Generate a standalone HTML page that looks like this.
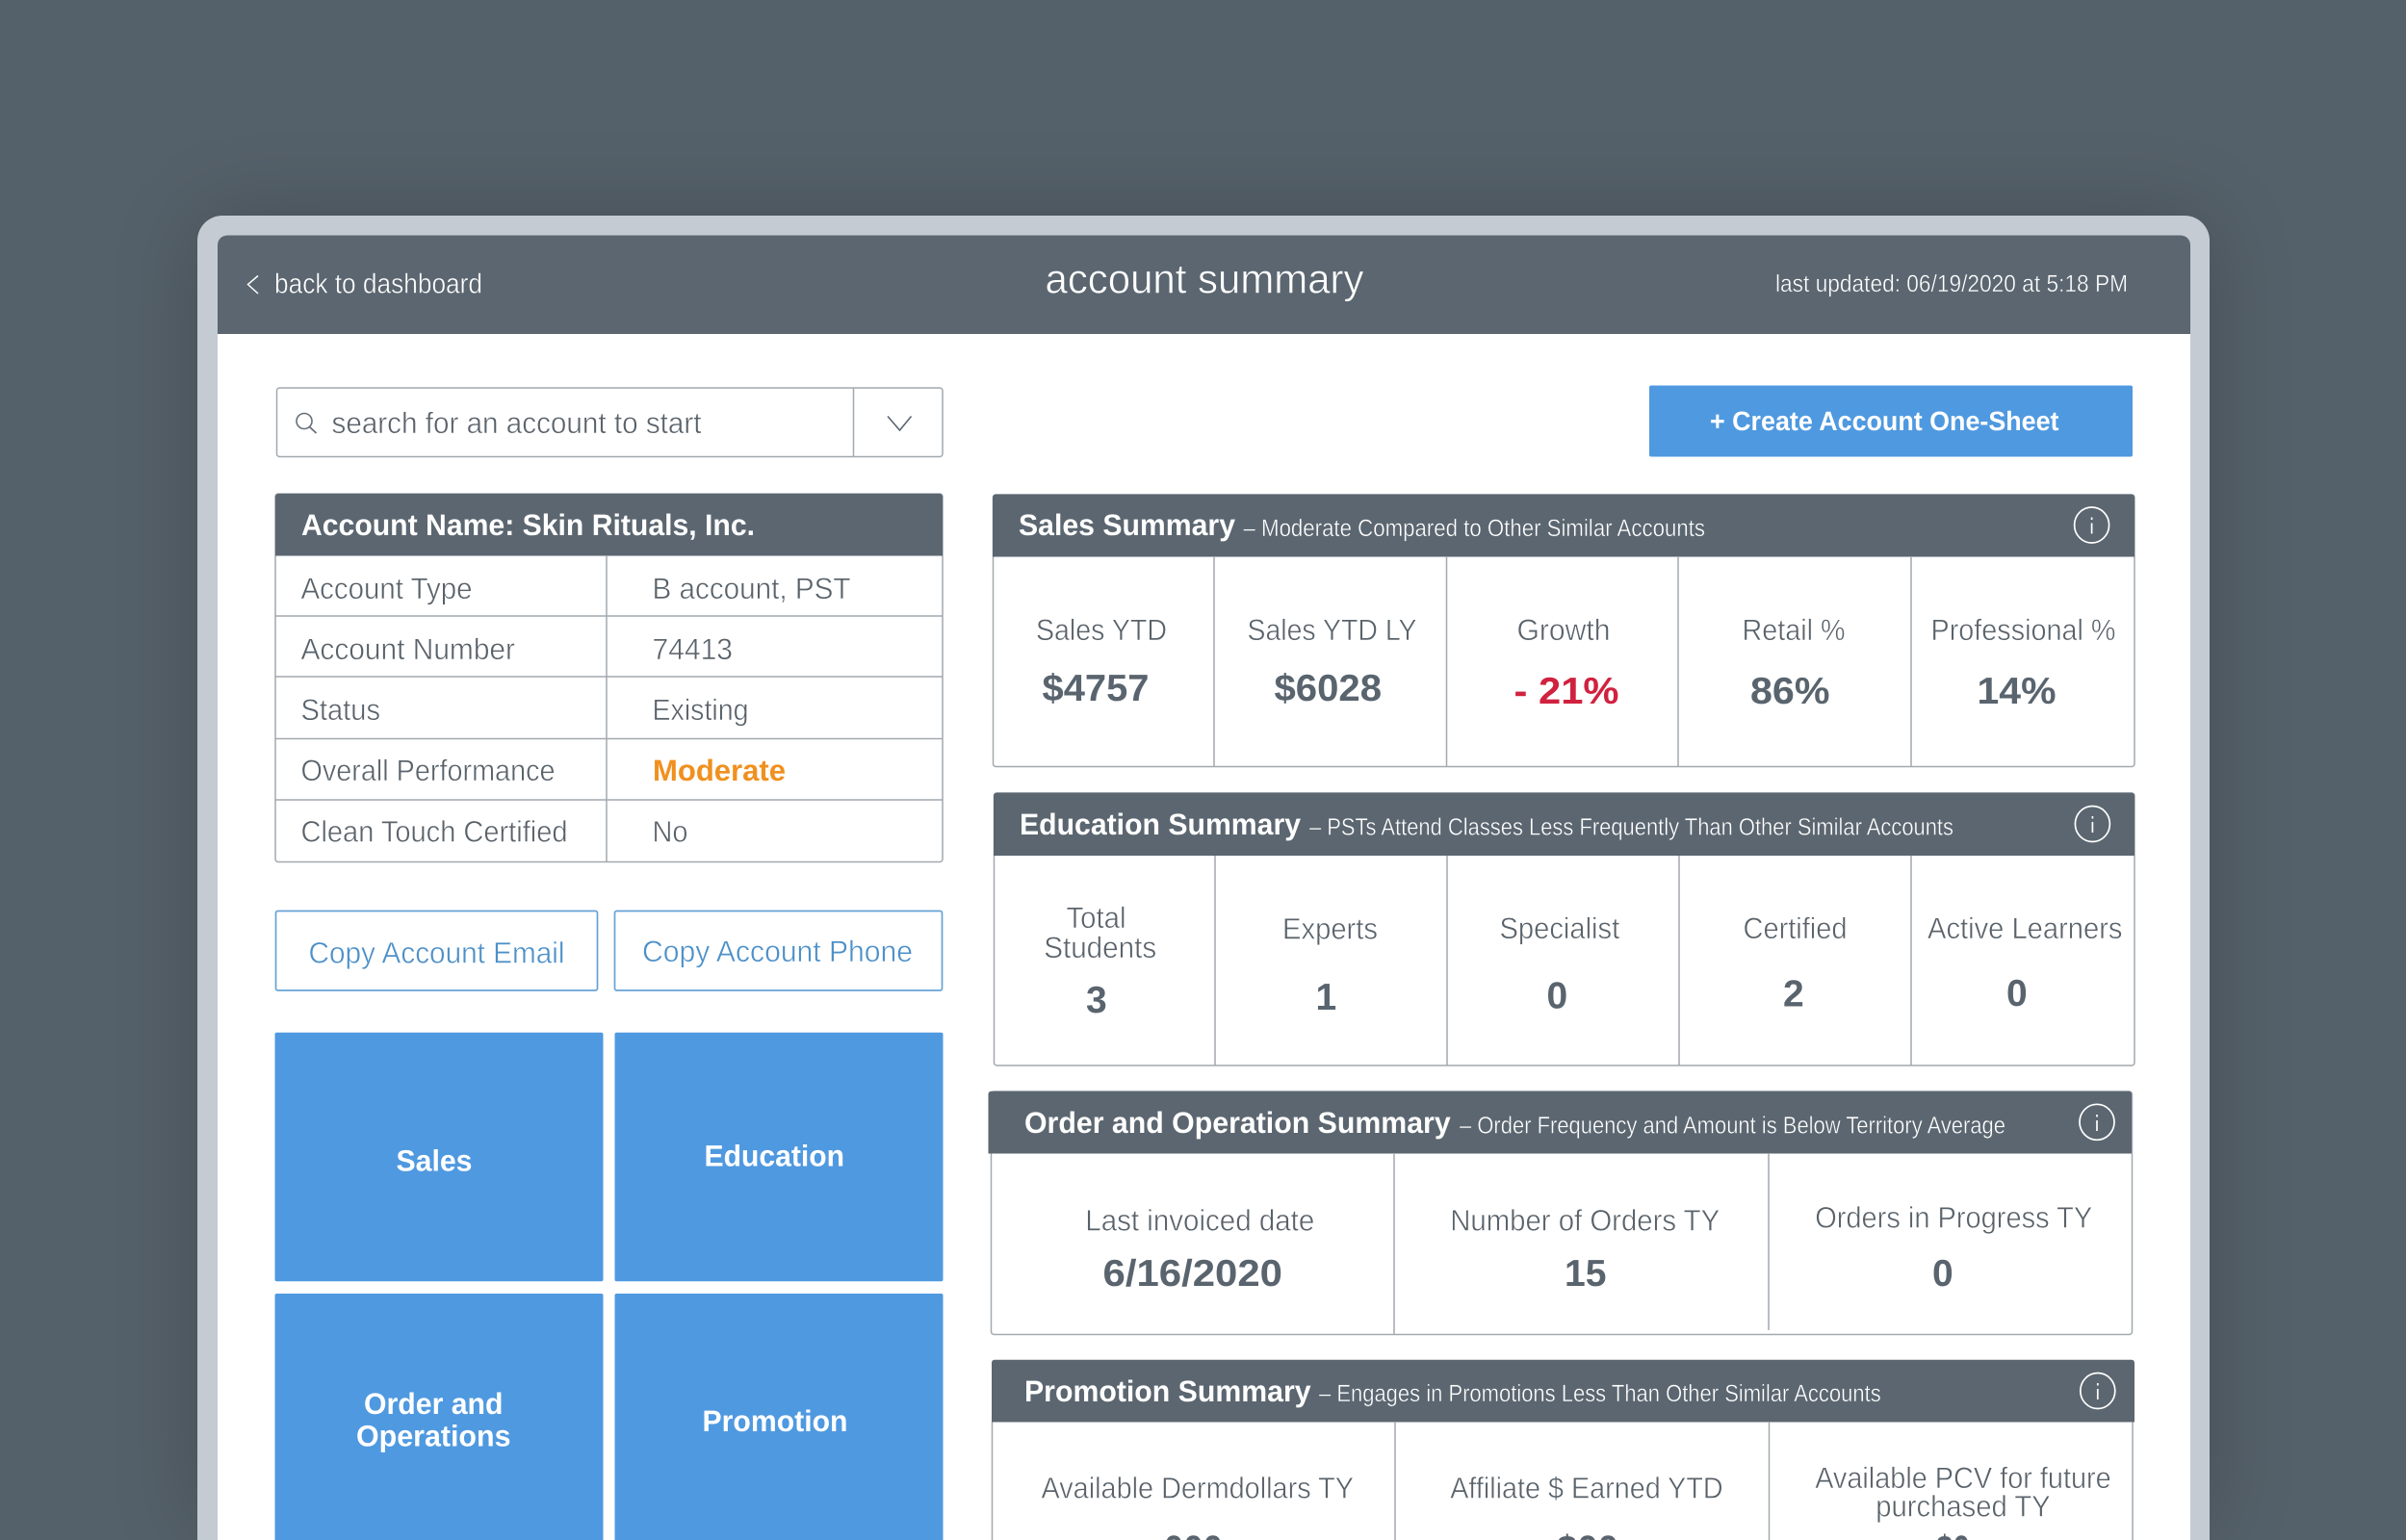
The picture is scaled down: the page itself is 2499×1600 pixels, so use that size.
<!DOCTYPE html>
<html><head><meta charset="utf-8"><title>account summary</title>
<style>
html,body{margin:0;padding:0;background:#55616a;width:2499px;height:1600px;overflow:hidden}
svg{display:block}
text{font-family:"Liberation Sans",Arial,sans-serif;text-rendering:geometricPrecision}
.l{fill:#59626a;font-size:31px;stroke:#fff;stroke-width:.55px}
.b{fill:#59646e;font-size:39px;font-weight:700}
.h{fill:#fff;font-size:31px;font-weight:700}
.s{fill:#fff;font-size:25px;stroke:#5b6670;stroke-width:.45px}
.w{fill:#fff;font-size:31px;font-weight:700}
.line{stroke:#a2a9af;stroke-width:1.5;fill:none}
.bar{fill:#5b6670}
.blue{fill:#4f99e0}
.ic{fill:none;stroke:#fff;stroke-width:1.7}
</style></head><body>
<svg xmlns="http://www.w3.org/2000/svg" width="2499" height="1600" viewBox="0 0 2499 1600">
<defs>
<filter id="sh" x="-20%" y="-30%" width="140%" height="160%"><feGaussianBlur stdDeviation="45"/></filter>
</defs>
<rect width="2499" height="1600" fill="#55616a"/>
<rect x="205" y="224" width="2090" height="1370" rx="28" fill="#000" opacity=".2" filter="url(#sh)"/>
<path d="M205 1600V250a26 26 0 0 1 26-26H2269a26 26 0 0 1 26 26V1600Z" fill="#c5cbd2"/>
<path d="M226 1600V254.500a10 10 0 0 1 10-10H2265a10 10 0 0 1 10 10V1600Z" fill="#fff"/>
<path d="M226 347V254.500a10 10 0 0 1 10-10H2265a10 10 0 0 1 10 10V347Z" class="bar"/>

<path d="M268 286.500L257.500 295.500L268 305" fill="none" stroke="#fff" stroke-width="1.5"/>
<text x="285" y="304.500" fill="#fff" font-size="29" stroke="#5b6670" stroke-width=".5" textLength="216" lengthAdjust="spacingAndGlyphs">back to dashboard</text>
<text x="1085.500" y="304.500" fill="#fff" font-size="43" stroke="#5b6670" stroke-width=".6" textLength="331" lengthAdjust="spacingAndGlyphs">account summary</text>
<text x="1844" y="303" class="s" textLength="366" lengthAdjust="spacingAndGlyphs">last updated: 06/19/2020 at 5:18 PM</text>

<!-- search -->
<rect x="287.500" y="403" width="691.500" height="71.500" rx="3" class="line"/>
<path d="M886.500 403V474.500" class="line"/>
<circle cx="316" cy="437.500" r="8" fill="none" stroke="#666f77" stroke-width="1.6"/>
<path d="M321.500 443.500L328.500 450" stroke="#666f77" stroke-width="1.8"/>
<text x="344.500" y="450" class="l" textLength="384" lengthAdjust="spacingAndGlyphs">search for an account to start</text>
<path d="M922 432.500L934.500 447L946.500 432.500" fill="none" stroke="#5b6670" stroke-width="1.6"/>

<!-- create -->
<rect x="1713" y="400.500" width="502" height="74" rx="2" class="blue"/>
<text x="1776" y="447" class="w" style="font-size:28px" textLength="362.500" lengthAdjust="spacingAndGlyphs">+ Create Account One-Sheet</text>

<!-- account table -->
<rect x="286" y="513" width="693" height="382.500" rx="3" class="line"/>
<path d="M286 577.500V516a3 3 0 0 1 3-3H976a3 3 0 0 1 3 3V577.500Z" class="bar"/>
<path d="M286 640H979M286 703H979M286 767.500H979M286 831H979M630 577V895" class="line"/>
<text x="313" y="556" class="h" textLength="471" lengthAdjust="spacingAndGlyphs">Account Name: Skin Rituals, Inc.</text>
<text x="312.500" y="622" class="l" textLength="178" lengthAdjust="spacingAndGlyphs">Account Type</text>
<text x="312.500" y="685" class="l" textLength="222.500" lengthAdjust="spacingAndGlyphs">Account Number</text>
<text x="312.500" y="748.200" class="l" textLength="82.500" lengthAdjust="spacingAndGlyphs">Status</text>
<text x="312.500" y="811" class="l" textLength="264" lengthAdjust="spacingAndGlyphs">Overall Performance</text>
<text x="312.500" y="874.300" class="l" textLength="277" lengthAdjust="spacingAndGlyphs">Clean Touch Certified</text>
<text x="677.500" y="622" class="l" textLength="206" lengthAdjust="spacingAndGlyphs">B account, PST</text>
<text x="677.500" y="685" class="l" textLength="83.500" lengthAdjust="spacingAndGlyphs">74413</text>
<text x="677.500" y="748.200" class="l" textLength="100" lengthAdjust="spacingAndGlyphs">Existing</text>
<text x="678" y="811" fill="#f0901e" font-size="31" font-weight="700" textLength="138" lengthAdjust="spacingAndGlyphs">Moderate</text>
<text x="677.500" y="874.300" class="l" textLength="37" lengthAdjust="spacingAndGlyphs">No</text>

<!-- copy buttons -->
<rect x="286.500" y="946.500" width="334" height="82.500" rx="2" fill="#fff" stroke="#67a3d6" stroke-width="1.700"/>
<rect x="638.500" y="946.500" width="340" height="82.500" rx="2" fill="#fff" stroke="#67a3d6" stroke-width="1.700"/>
<text x="320.500" y="1000.400" fill="#4d90c8" font-size="31" stroke="#fff" stroke-width=".5" textLength="266" lengthAdjust="spacingAndGlyphs">Copy Account Email</text>
<text x="667" y="999" fill="#4d90c8" font-size="31" stroke="#fff" stroke-width=".5" textLength="281" lengthAdjust="spacingAndGlyphs">Copy Account Phone</text>

<!-- tiles -->
<rect x="285.500" y="1072.800" width="341" height="258.500" rx="2" class="blue"/>
<rect x="638.500" y="1072.800" width="341" height="258.500" rx="2" class="blue"/>
<path d="M285.500 1600V1346a2 2 0 0 1 2-2H624.500a2 2 0 0 1 2 2V1600Z" class="blue"/>
<path d="M638.500 1600V1346a2 2 0 0 1 2-2H977.500a2 2 0 0 1 2 2V1600Z" class="blue"/>
<text x="411.500" y="1216.500" class="w" textLength="79" lengthAdjust="spacingAndGlyphs">Sales</text>
<text x="731.500" y="1211.600" class="w" textLength="145.500" lengthAdjust="spacingAndGlyphs">Education</text>
<text x="378" y="1469" class="w" textLength="144.500" lengthAdjust="spacingAndGlyphs">Order and</text>
<text x="370" y="1502.700" class="w" textLength="160.500" lengthAdjust="spacingAndGlyphs">Operations</text>
<text x="729.500" y="1487" class="w" textLength="151" lengthAdjust="spacingAndGlyphs">Promotion</text>

<!-- Sales Summary -->
<rect x="1031.500" y="514" width="1185.500" height="282.500" rx="3" class="line"/>
<path d="M1031 578.500V516.500a3 3 0 0 1 3-3H2214a3 3 0 0 1 3 3V578.500Z" class="bar"/>
<path d="M1261 578V796M1502.500 578V796M1743 578V796M1985 578V796" class="line"/>
<text x="1058" y="556" class="h" textLength="225" lengthAdjust="spacingAndGlyphs">Sales Summary</text>
<text x="1291.500" y="557" class="s" textLength="479.500" lengthAdjust="spacingAndGlyphs">– Moderate Compared to Other Similar Accounts</text>
<ellipse cx="2172.600" cy="545.500" rx="18" ry="18.500" class="ic"/><path d="M2172.600 543.500V554.500M2172.600 537.500V540" class="ic"/>
<text x="1076" y="665" class="l" textLength="136" lengthAdjust="spacingAndGlyphs">Sales YTD</text>
<text x="1295.500" y="665" class="l" textLength="176" lengthAdjust="spacingAndGlyphs">Sales YTD LY</text>
<text x="1575.500" y="665" class="l" textLength="97" lengthAdjust="spacingAndGlyphs">Growth</text>
<text x="1809.500" y="665" class="l" textLength="107" lengthAdjust="spacingAndGlyphs">Retail %</text>
<text x="2005.500" y="665" class="l" textLength="192" lengthAdjust="spacingAndGlyphs">Professional %</text>
<text x="1082.500" y="728" class="b" textLength="111" lengthAdjust="spacingAndGlyphs">$4757</text>
<text x="1323.500" y="728" class="b" textLength="111.500" lengthAdjust="spacingAndGlyphs">$6028</text>
<text x="1572.500" y="731" fill="#d0223f" font-size="39" font-weight="700" textLength="109" lengthAdjust="spacingAndGlyphs">- 21%</text>
<text x="1818" y="731" class="b" textLength="82.500" lengthAdjust="spacingAndGlyphs">86%</text>
<text x="2053.500" y="731" class="b" textLength="82" lengthAdjust="spacingAndGlyphs">14%</text>

<!-- Education Summary -->
<rect x="1032.500" y="824" width="1184.500" height="283" rx="3" class="line"/>
<path d="M1032 889V826.500a3 3 0 0 1 3-3H2214a3 3 0 0 1 3 3V889Z" class="bar"/>
<path d="M1262 889V1107M1503 889V1107M1744 889V1107M1985 889V1107" class="line"/>
<text x="1059" y="866.800" class="h" textLength="292" lengthAdjust="spacingAndGlyphs">Education Summary</text>
<text x="1360" y="867.300" class="s" textLength="669" lengthAdjust="spacingAndGlyphs">– PSTs Attend Classes Less Frequently Than Other Similar Accounts</text>
<ellipse cx="2173.400" cy="856" rx="18" ry="18.500" class="ic"/><path d="M2173.400 854V865M2173.400 848V850.500" class="ic"/>
<text x="1107.500" y="964" class="l" textLength="62" lengthAdjust="spacingAndGlyphs">Total</text>
<text x="1084.200" y="995" class="l" textLength="117" lengthAdjust="spacingAndGlyphs">Students</text>
<text x="1332" y="975.500" class="l" textLength="99" lengthAdjust="spacingAndGlyphs">Experts</text>
<text x="1557.500" y="975" class="l" textLength="124.700" lengthAdjust="spacingAndGlyphs">Specialist</text>
<text x="1810.500" y="975" class="l" textLength="108" lengthAdjust="spacingAndGlyphs">Certified</text>
<text x="2002" y="975" class="l" textLength="202.500" lengthAdjust="spacingAndGlyphs">Active Learners</text>
<text x="1128" y="1052" class="b">3</text>
<text x="1366.500" y="1049" class="b">1</text>
<text x="1606.500" y="1047.400" class="b">0</text>
<text x="1852" y="1045.400" class="b">2</text>
<text x="2084" y="1045" class="b">0</text>

<!-- Order Summary -->
<rect x="1029.500" y="1134" width="1185" height="252.500" rx="3" class="line"/>
<path d="M1026.500 1198.500V1136.700a3 3 0 0 1 3-3H2211a3 3 0 0 1 3 3V1198.500Z" class="bar"/>
<path d="M1448 1198V1386M1837 1198V1382" class="line"/>
<text x="1064" y="1177" class="h" textLength="442.700" lengthAdjust="spacingAndGlyphs">Order and Operation Summary</text>
<text x="1516" y="1177.500" class="s" textLength="567" lengthAdjust="spacingAndGlyphs">– Order Frequency and Amount is Below Territory Average</text>
<ellipse cx="2178" cy="1165.800" rx="18" ry="18.500" class="ic"/><path d="M2178 1164V1175M2178 1158V1160.500" class="ic"/>
<text x="1127.300" y="1278.600" class="l" textLength="238" lengthAdjust="spacingAndGlyphs">Last invoiced date</text>
<text x="1506.200" y="1278.600" class="l" textLength="280" lengthAdjust="spacingAndGlyphs">Number of Orders TY</text>
<text x="1885.200" y="1275.600" class="l" textLength="288" lengthAdjust="spacingAndGlyphs">Orders in Progress TY</text>
<text x="1145.500" y="1336" class="b" textLength="186.500" lengthAdjust="spacingAndGlyphs">6/16/2020</text>
<text x="1625" y="1336" class="b" textLength="43.500" lengthAdjust="spacingAndGlyphs">15</text>
<text x="2007" y="1336" class="b">0</text>

<!-- Promotion Summary -->
<path d="M1030.500 1477V1600M2215 1477V1600" class="line"/>
<path d="M1030 1477.500V1415.800a3 3 0 0 1 3-3H2214a3 3 0 0 1 3 3V1477.500Z" class="bar"/>
<path d="M1449 1477V1600M1837.500 1477V1600" class="line"/>
<text x="1064" y="1455.800" class="h" textLength="297.600" lengthAdjust="spacingAndGlyphs">Promotion Summary</text>
<text x="1370" y="1456" class="s" textLength="583.700" lengthAdjust="spacingAndGlyphs">– Engages in Promotions Less Than Other Similar Accounts</text>
<ellipse cx="2178.800" cy="1445" rx="18" ry="18.500" class="ic"/><path d="M2178.800 1443V1454M2178.800 1437V1439.500" class="ic"/>
<text x="1081.500" y="1556.300" class="l" textLength="324.500" lengthAdjust="spacingAndGlyphs">Available Dermdollars TY</text>
<text x="1506.200" y="1556.300" class="l" textLength="283.500" lengthAdjust="spacingAndGlyphs">Affiliate $ Earned YTD</text>
<text x="1885.200" y="1546" class="l" textLength="307.500" lengthAdjust="spacingAndGlyphs">Available PCV for future</text>
<text x="1948.200" y="1575.500" class="l" textLength="181.500" lengthAdjust="spacingAndGlyphs">purchased TY</text>
<text x="1209" y="1622.500" class="b" textLength="61" lengthAdjust="spacingAndGlyphs">000</text>
<text x="1617" y="1622.500" class="b" textLength="64" lengthAdjust="spacingAndGlyphs">$00</text>
<text x="2011" y="1622.500" class="b" textLength="35" lengthAdjust="spacingAndGlyphs">$0</text>
</svg>
</body></html>
